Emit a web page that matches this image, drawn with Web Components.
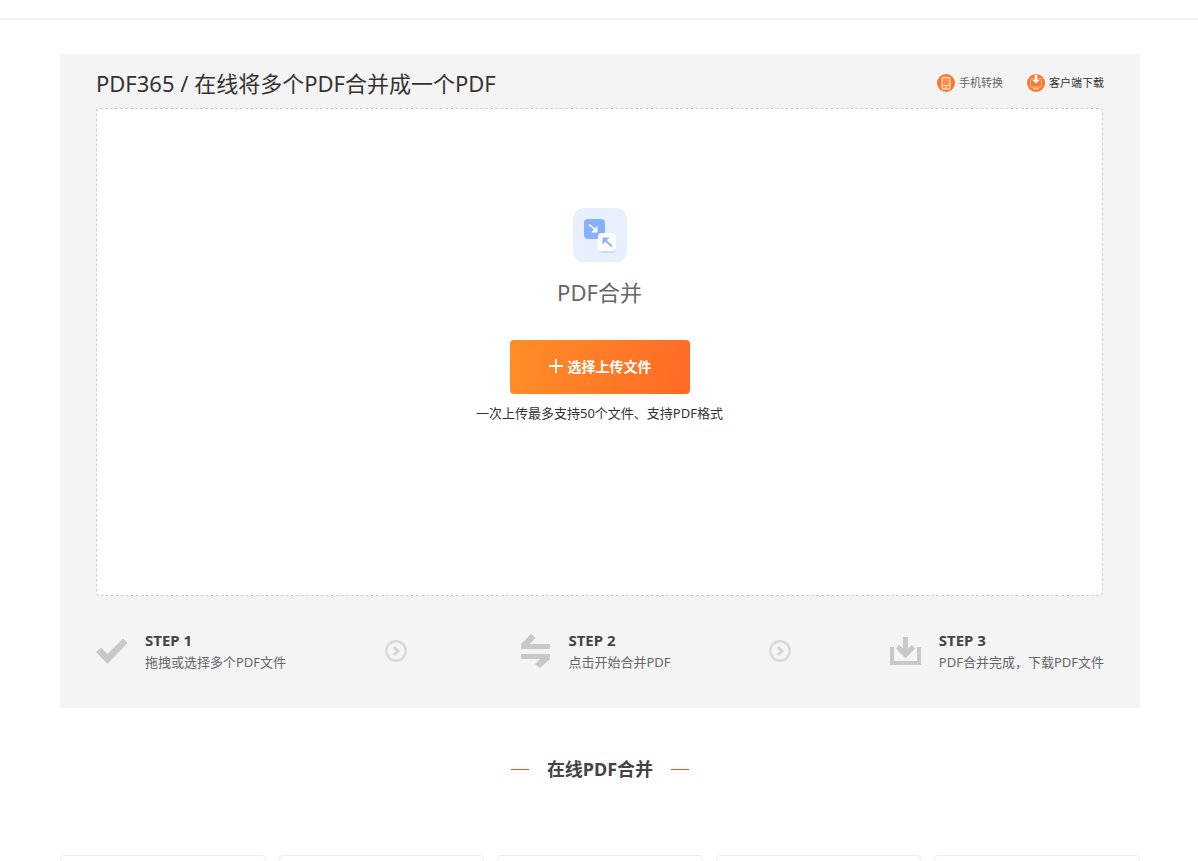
<!DOCTYPE html>
<html lang="zh-CN">
<head>
<meta charset="utf-8">
<meta name="viewport" content="width=device-width, initial-scale=1">
<title>PDF365</title>
<style>
body{margin:0;background:#fff;color:#333;font-family:"Noto Sans","Noto Sans CJK SC",sans-serif}
</style>
</head>
<body>
<pdf-page>
  <merge-panel>
    <tool-link slot="links" href="#mobile" tone="#666">
      <svg slot="icon" width="18" height="18" viewBox="0 0 18 18"><circle cx="9" cy="9" r="9" fill="#ff752b"/><rect x="5" y="3.5" width="8" height="11.5" rx="1.3" fill="#ff8d4c" stroke="#ffd9c0" stroke-width="1.300"/><path d="M5 11.5h8M8 13.2h2" stroke="#ffd9c0" stroke-width="1.100"/></svg>手机转换</tool-link>
    <tool-link slot="links" href="#client" tone="#333">
      <svg slot="icon" width="18" height="18" viewBox="0 0 18 18"><circle cx="9" cy="9" r="9" fill="#ff752b"/><path d="M6 4.500H4.500Q3.500 4.500 3.500 5.500V12Q3.500 13 4.500 13H13.500Q14.500 13 14.500 12V5.500Q14.500 4.500 13.500 4.500H12" fill="none" stroke="#ffc39c"/><path d="M6 14.700h6" stroke="#ffd3b5" stroke-width="1.300"/><path d="M7.700 0.800h2.600v5h2.700L9 9.500 5 5.800h2.700z" fill="#fff"/></svg>客户端下载</tool-link>
    <upload-zone slot="upload"></upload-zone>
    <step-item slot="steps" name="STEP 1">
      <svg slot="icon" width="32" height="34" viewBox="0 0 32 34" fill="#c8c8c8"><path d="M0 18l5-4.500 6.500 6.500L27 4.500l4.500 4.500L11.500 30z"/></svg>拖拽或选择多个PDF文件</step-item>
    <step-arrow slot="steps"></step-arrow>
    <step-item slot="steps" name="STEP 2" class="middle">
      <svg slot="icon" width="32" height="34" viewBox="0 0 32 34" fill="#c8c8c8"><path d="M2 15v-5L12 0l4.500 4L10.500 10H31v5zM31 20v5L21 34l-5-4 5.500-5H2v-5z"/></svg>点击开始合并PDF</step-item>
    <step-arrow slot="steps"></step-arrow>
    <step-item slot="steps" name="STEP 3">
      <svg slot="icon" width="32" height="34" viewBox="0 0 32 34" fill="#c8c8c8"><path d="M0 13h4v14h23V13h4v18H0zM13 3h5v11.500l4-3.500 3 3.500-9 9.500h-1L6 14.500 9 11l4 3.500z"/></svg>PDF合并完成，下载PDF文件</step-item>
  </merge-panel>
  <section-title>在线PDF合并</section-title>
  <card-row></card-row>
</pdf-page>
<script>
const define = (name, html, setup) => {
  const t = document.createElement('template');
  t.innerHTML = html;
  customElements.define(name, class extends HTMLElement {
    constructor() {
      super();
      this.attachShadow({mode: 'open'}).append(t.content.cloneNode(true));
    }
    connectedCallback() { if (setup) setup(this, this.shadowRoot); }
  });
};

define('pdf-page', `<style>
:host{display:block;height:100vh;overflow:hidden}
header{height:18px;border-bottom:2px solid #f3f3f3}
main{padding:34px 58px 0 60px}
</style><header></header><main><slot></slot></main>`);

define('merge-panel', `<style>
:host{display:block;background:#f4f4f4;padding:0 36px 35px}
.head{display:flex;align-items:center;justify-content:space-between;min-height:50px;padding-top:4px}
h1{margin:0;font-size:22px;line-height:32px;font-weight:400}
nav{display:flex;gap:24px}
.steps{display:flex;align-items:center;justify-content:space-between;padding-top:33px}
::slotted(.middle){padding-left:14px}
</style>
<div class="head"><h1>PDF365 / 在线将多个PDF合并成一个PDF</h1><nav><slot name="links"></slot></nav></div>
<slot name="upload"></slot>
<div class="steps"><slot name="steps"></slot></div>`);

define('tool-link', `<style>
:host{display:block}
a{display:flex;align-items:center;gap:4px;font-size:11px;line-height:18px;text-decoration:none}
::slotted(svg){display:block}
</style><a><slot name="icon"></slot><span><slot></slot></span></a>`, (el, root) => {
  const a = root.querySelector('a');
  a.href = el.getAttribute('href');
  a.style.color = el.getAttribute('tone');
});

define('upload-zone', `<style>
:host{display:flex;flex-direction:column;align-items:center;box-sizing:border-box;min-height:488px;margin-right:1px;padding-top:99px;background:#fff;border:1px dashed #ccc;border-radius:4px}
svg{display:block}
h2{margin:14px 0 0;font-size:22px;line-height:32px;font-weight:400;color:#666}
button{display:flex;align-items:center;justify-content:center;gap:4px;width:180px;height:54px;margin-top:32px;padding:0;border:0;border-radius:4px;background:linear-gradient(100deg,#ff8e27,#ff6a26);color:#fff;font:bold 14px/20px "Noto Sans","Noto Sans CJK SC",sans-serif}
p{margin:8px 0 0;font-size:13px;line-height:22px}
</style>
<svg width="54" height="54" viewBox="0 0 54 54"><rect width="54" height="54" rx="11" fill="#e8f0ff"/><rect x="11" y="11" width="21" height="20" rx="4" fill="#85b1ff"/><path d="M16 16.500l6 5" stroke="#fff" stroke-width="1.600"/><path d="M24.500 18v6.500H18z" fill="#fff"/><rect x="26" y="28" width="17" height="17" rx="4" fill="#cbdcf8"/><rect x="25" y="25" width="18" height="18" rx="4" fill="#fff"/><path d="M32 32l7 6.500" stroke="#85b1ff" stroke-width="1.800"/><path d="M29.500 29.500h7l-7 7z" fill="#85b1ff"/></svg>
<h2>PDF合并</h2>
<button type="button"><svg width="16" height="18" viewBox="0 0 16 18"><path d="M8 1v14M1 8h14" stroke="#fff" stroke-width="1.800"/></svg><span>选择上传文件</span></button>
<p>一次上传最多支持50个文件、支持PDF格式</p>`);

define('step-item', `<style>
:host{display:flex;align-items:center;gap:17px}
::slotted(svg){display:block}
h3{margin:0;font-size:15px;line-height:22px;font-weight:700;color:#444}
p{margin:0;font-size:13px;line-height:22px;color:#666}
</style><slot name="icon"></slot><div><h3></h3><p><slot></slot></p></div>`, (el, root) => {
  root.querySelector('h3').textContent = el.getAttribute('name');
});

define('step-arrow', `<style>
:host{display:block}svg{display:block}
</style><svg width="22" height="22" viewBox="0 0 22 22" fill="none"><circle cx="11" cy="11" r="9.800" stroke="#d8d8d8" stroke-width="2.400"/><path d="M9 7.200l4 3.800-4 3.800" stroke="#d4d4d4" stroke-width="2.800"/></svg>`);

define('section-title', `<style>
:host{display:flex;align-items:center;justify-content:center;gap:18px;padding:46px 0 71px}
h2{margin:0;font-size:18px;line-height:30px;font-weight:700;color:#444}
i{width:18px;height:1px;background:#f5532d}
</style><i></i><h2><slot></slot></h2><i></i>`);

define('card-row', `<style>
:host{display:grid;grid-template-columns:repeat(5,1fr);gap:13px}
div{height:200px;border:1px solid #eee;border-radius:4px}
</style><div></div><div></div><div></div><div></div><div></div>`);
</script>
</body>
</html>
